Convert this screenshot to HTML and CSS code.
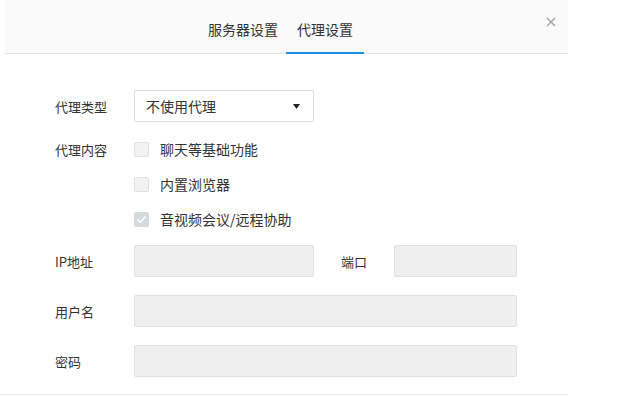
FILE: index.html
```html
<!DOCTYPE html>
<html lang="zh-CN">
<head>
    <meta charset="UTF-8">
    <title>代理设置</title>
    <link rel="stylesheet" href="styles.css">
</head>
<body>
    <div class="dialog">
        <!-- 标签栏 -->
        <div class="header">
            <div class="tab">服务器设置</div>
            <div class="tab active">代理设置</div>
            <div class="close">
                <svg width="10" height="10" viewBox="0 0 10 10"><path d="M1 1L9 9M9 1L1 9" stroke="#a0a0a0" stroke-width="1.3"/></svg>
            </div>
        </div>

        <!-- 表单 -->
        <div class="form">
            <div class="row row-select">
                <div class="label">代理类型</div>
                <div class="select">
                    <span>不使用代理</span>
                    <svg width="7" height="5" viewBox="0 0 7 5"><path d="M0 0H7L3.5 5Z" fill="#222"/></svg>
                </div>
            </div>

            <div class="row row-check">
                <div class="label">代理内容</div>
                <label class="check"><span class="box"></span>聊天等基础功能</label>
            </div>
            <div class="row row-check">
                <div class="label"></div>
                <label class="check"><span class="box"></span>内置浏览器</label>
            </div>
            <div class="row row-check">
                <div class="label"></div>
                <label class="check"><span class="box checked"><svg width="11" height="9" viewBox="0 0 11 9"><path d="M1.5 4.5L4.2 7.2L9.5 1.5" fill="none" stroke="#fff" stroke-width="1.4"/></svg></span>音视频会议/远程协助</label>
            </div>

            <div class="row row-input first">
                <div class="label">IP地址</div>
                <div class="input ip"></div>
                <div class="label port-label">端口</div>
                <div class="input port"></div>
            </div>
            <div class="row row-input">
                <div class="label">用户名</div>
                <div class="input wide"></div>
            </div>
            <div class="row row-input">
                <div class="label">密码</div>
                <div class="input wide"></div>
            </div>
        </div>

        <div class="footer"></div>
    </div>
</body>
</html>
```

FILE: styles.css
```css
body {
    margin: 0;
    background: #fff;
    font-family: "Noto Sans CJK SC", "Noto Sans", sans-serif;
    color: #333;
}

.dialog {
    width: 563px;
    margin-left: 5px;
    position: relative;
}

/* 标签栏 */
.header {
    height: 53px;
    background-color: #fafafa;
    border-bottom: 1px solid #e2e2e2;
    display: flex;
    justify-content: center;
    align-items: flex-end;
    padding-right: 9px;
}

.tab {
    font-size: 14px;
    padding: 0 8px;
    height: 38px;
    line-height: 26px;
    box-sizing: border-box;
    margin-bottom: -1px;
    border-bottom: 2px solid transparent;
}

.tab.active {
    border-bottom-color: #1e90e6;
    padding: 0 11px;
}

.close {
    position: absolute;
    top: 17px;
    left: 541px;
    width: 10px;
    height: 10px;
}

.close svg {
    display: block;
}

/* 表单 */
.form {
    padding: 36px 0 0 50px;
}

.row {
    display: flex;
    align-items: center;
}

.label {
    width: 79px;
    font-size: 13px;
    flex-shrink: 0;
}

.row-check {
    height: 34px;
}

.row-select + .row-check {
    margin-top: 10px;
}

.row-check + .row-check {
    margin-top: 1px;
}

.select {
    width: 180px;
    height: 32px;
    box-sizing: border-box;
    border: 1px solid #dedede;
    border-radius: 2px;
    background: #fff;
    display: flex;
    align-items: center;
    justify-content: space-between;
    padding: 0 13px 0 11px;
    font-size: 14px;
}

.check {
    display: flex;
    align-items: center;
    font-size: 14px;
}

.box {
    width: 15px;
    height: 15px;
    box-sizing: border-box;
    border: 1px solid #e0e0e0;
    background: #f2f2f2;
    border-radius: 2px;
    margin-right: 11px;
    display: flex;
    align-items: center;
    justify-content: center;
}

.box.checked {
    background: #d6d9dd;
    border-color: #d6d9dd;
}

.row-input {
    height: 32px;
    margin-top: 18px;
}

.row-input.first {
    margin-top: 9px;
}

.input {
    height: 32px;
    box-sizing: border-box;
    background: #efefef;
    border: 1px solid #e0e0e0;
    border-radius: 2px;
}

.input.ip {
    width: 180px;
    margin-right: 27px;
}

.port-label {
    width: 53px;
}

.input.port {
    width: 123px;
}

.input.wide {
    width: 383px;
}

.footer {
    margin-top: 17px;
    border-top: 1px solid #ececec;
    margin-left: -5px;
}
```
